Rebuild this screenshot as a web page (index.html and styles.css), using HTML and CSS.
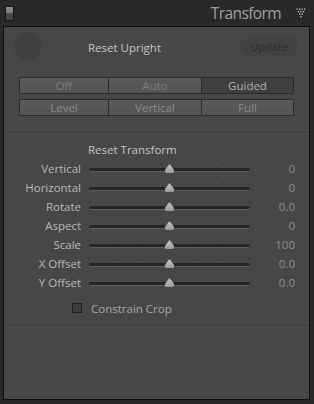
FILE: index.html
```html
<!DOCTYPE html>
<html lang="en">
<head>
  <meta charset="UTF-8" />
  <title>Transform</title>
  <link rel="stylesheet" href="styles.css">
</head>
<body>

  <div class="header">
    <span class="solo"></span>
    <span class="title">Transform</span>
    <svg class="tri" width="10" height="10" viewBox="0 0 10 10">
      <g fill="#c4c4c4">
        <rect x="0.5" y="0.5" width="1.3" height="1.3"/><rect x="3" y="0.5" width="1.3" height="1.3"/><rect x="5.5" y="0.5" width="1.3" height="1.3"/><rect x="8" y="0.5" width="1.3" height="1.3"/>
        <rect x="1.8" y="3" width="1.3" height="1.3"/><rect x="4.3" y="3" width="1.3" height="1.3"/><rect x="6.8" y="3" width="1.3" height="1.3"/>
        <rect x="3" y="5.5" width="1.3" height="1.3"/><rect x="5.5" y="5.5" width="1.3" height="1.3"/>
        <rect x="4.3" y="8" width="1.3" height="1.3"/>
      </g>
    </svg>
  </div>

  <div class="panel">
    <div class="upright">
      <span class="dot"></span>
      <span class="reset-up">Reset Upright</span>
      <span class="update">Update</span>
    </div>

    <div class="seg">
      <span>Off</span><span>Auto</span><span class="on">Guided</span>
    </div>
    <div class="seg seg-2">
      <span>Level</span><span>Vertical</span><span>Full</span>
    </div>

    <div class="sep"></div>

    <div class="reset-tr">Reset Transform</div>

    <div class="sliders" id="sliders"></div>

    <div class="check">
      <span class="box"></span>
      <span>Constrain Crop</span>
    </div>

    <div class="sep"></div>
  </div>

  <script>
    const rows = [
      ['Vertical', '0'],
      ['Horizontal', '0'],
      ['Rotate', '0.0'],
      ['Aspect', '0'],
      ['Scale', '100'],
      ['X Offset', '0.0'],
      ['Y Offset', '0.0']
    ];
    const box = document.getElementById('sliders');
    rows.forEach(([name, val]) => {
      const row = document.createElement('div');
      row.className = 'row';
      row.innerHTML = `
        <span class="label">${name}</span>
        <span class="slider">
          <span class="track"></span>
          <svg class="thumb" width="9" height="9" viewBox="0 0 9 9">
            <defs>
              <linearGradient id="g" x1="0" y1="0" x2="0" y2="1">
                <stop offset="0" stop-color="#c8c8c8"/>
                <stop offset="1" stop-color="#9a9a9a"/>
              </linearGradient>
            </defs>
            <path d="M4.5 0 L8.6 5.2 Q9 5.8 9 6.5 V7.6 Q9 9 7.6 9 H1.4 Q0 9 0 7.6 V6.5 Q0 5.8 0.4 5.2 Z" fill="url(#g)"/>
          </svg>
        </span>
        <span class="value">${val}</span>
      `;
      box.appendChild(row);
    });
  </script>
</body>
</html>
```

FILE: styles.css
```css
body {
  margin: 0;
  width: 314px;
  height: 404px;
  background: #292929;
  font-family: "Open Sans", "Noto Sans", sans-serif;
  font-size: 11px;
  overflow: hidden;
}

/* header */
.header {
  height: 26px;
  display: flex;
  align-items: center;
  padding-left: 5px;
}

.solo {
  width: 7px;
  height: 13px;
  border: 1px solid #141414;
  background: linear-gradient(#8e8e8e 0, #7a7a7a 50%, #4a4a4a 50%, #444 100%);
  margin-top: 1px;
}

.title {
  margin-left: auto;
  color: #a0a0a0;
  font-size: 15.5px;
  letter-spacing: -0.6px;
  line-height: 26px;
}

.tri {
  margin: 0 8px 0 15px;
}

/* panel */
.panel {
  margin-left: 3px;
  width: 305px;
  height: 372px;
  border: 1px solid #0f0f0f;
  background: #474747;
}

.upright {
  height: 40px;
  display: flex;
  align-items: center;
}

.dot {
  width: 28px;
  height: 28px;
  border-radius: 50%;
  background: #414141;
  margin-left: 10px;
  margin-top: -2px;
}

.reset-up {
  margin-left: 46px;
  color: #c4c4c4;
  font-size: 11.5px;
}

.update {
  margin-left: auto;
  margin-right: 11px;
  width: 58px;
  height: 20px;
  line-height: 20px;
  border-radius: 10px;
  background: #424242;
  color: #2c2c2c;
  text-align: center;
}

/* segmented buttons */
.seg {
  margin: 10px 15px 0;
  display: grid;
  grid-template-columns: 90px 93px 1fr;
  height: 17px;
}

.seg-2 {
  margin-top: 5px;
}

.seg span {
  border: 1px solid #2c2c2c;
  border-left: none;
  background: linear-gradient(#5a5a5a, #535353);
  color: #7e7e7e;
  text-align: center;
  line-height: 15px;
  font-size: 11.5px;
}

.seg span:first-child {
  border-left: 1px solid #2c2c2c;
}

.seg span.on {
  background: #3f3f3f;
  color: #b0b0b0;
}

.seg-2 span {
  color: #8a8a8a;
}

.sep {
  margin-top: 16px;
  height: 1px;
  background: #3b3b3b;
  border-bottom: 1px solid #4d4d4d;
}

.reset-tr {
  margin-top: 6px;
  padding-left: 84px;
  line-height: 19px;
  color: #c4c4c4;
  font-size: 11.5px;
}

/* sliders */
.row {
  display: grid;
  grid-template-columns: 77px 161px 37px;
  column-gap: 8px;
  height: 19px;
  align-items: center;
}

.label {
  text-align: right;
  color: #b8b8b8;
  font-size: 11.5px;
}

.value {
  text-align: right;
  color: #909090;
  font-size: 11.5px;
}

.slider {
  position: relative;
  height: 19px;
}

.slider::before {
  content: "";
  position: absolute;
  left: 0;
  right: 0;
  top: 4px;
  height: 2px;
  background: repeating-linear-gradient(90deg, #353535 0 1px, transparent 1px 26.7px);
}

.track {
  position: absolute;
  left: 0;
  right: 0;
  top: 9px;
  height: 3px;
  border-radius: 2px;
  background: #252525;
  border-bottom: 1px solid #5e5e5e;
}

.thumb {
  position: absolute;
  left: 76px;
  top: 5px;
}

/* checkbox */
.check {
  margin-top: 8px;
  height: 16px;
  display: flex;
  align-items: center;
  padding-left: 68px;
  color: #a8a8a8;
  font-size: 11.5px;
  gap: 9px;
}

.box {
  width: 8px;
  height: 8px;
  border: 1px solid #1c1c1c;
  background: #3c3c3c;
}

.check + .sep {
  margin-top: 9px;
}
```
